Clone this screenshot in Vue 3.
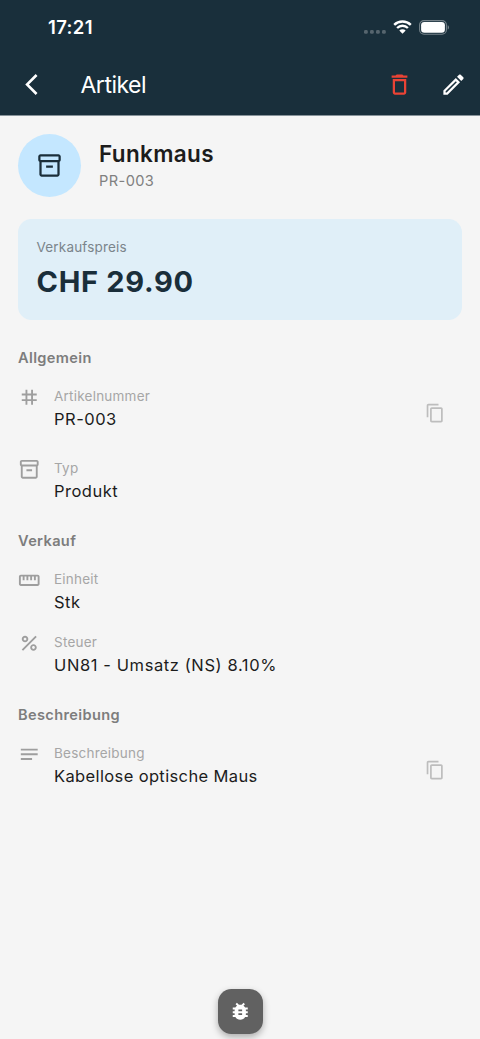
<script setup>
const icons = {
  archive: 'M20 2H4c-1 0-2 .9-2 2v3.01c0 .72.43 1.34 1 1.69V20c0 1.1 1.1 2 2 2h14c.9 0 2-.9 2-2V8.7c.57-.35 1-.97 1-1.69V4c0-1.1-1-2-2-2zm-1 18H5V9h14v11zm1-13H4V4h16v3zM9 12h6v2H9z',
  tag: 'M20 10V8h-4V4h-2v4h-4V4H8v4H4v2h4v4H4v2h4v4h2v-4h4v4h2v-4h4v-2h-4v-4h4zm-6 4h-4v-4h4v4z',
  ruler: 'M21 6H3c-1.1 0-2 .9-2 2v8c0 1.1.9 2 2 2h18c1.1 0 2-.9 2-2V8c0-1.1-.9-2-2-2zm0 10H3V8h2v4h2V8h2v4h2V8h2v4h2V8h2v4h2V8h2v8z',
  percent: 'M7.5 11C9.43 11 11 9.43 11 7.5S9.43 4 7.5 4 4 5.57 4 7.5 5.57 11 7.5 11zm0-5C8.33 6 9 6.67 9 7.5S8.33 9 7.5 9 6 8.33 6 7.5 6.67 6 7.5 6zM4 18.58L18.59 4l1.41 1.41L5.42 20zM16.5 13c-1.93 0-3.5 1.57-3.5 3.5s1.57 3.5 3.5 3.5 3.5-1.57 3.5-3.5-1.57-3.5-3.5-3.5zm0 5c-.83 0-1.5-.67-1.5-1.5s.67-1.5 1.5-1.5 1.5.67 1.5 1.5-.67 1.5-1.5 1.5z',
  notes: 'M21 11.01L3 11v2h18zM3 16h12v2H3zM21 6H3v2.01L21 8z',
  copy: 'M16 1H4c-1.1 0-2 .9-2 2v14h2V3h12V1zm3 4H8c-1.1 0-2 .9-2 2v14c0 1.1.9 2 2 2h11c1.1 0 2-.9 2-2V7c0-1.1-.9-2-2-2zm0 16H8V7h11v14z',
  trash: 'M6 19c0 1.1.9 2 2 2h8c1.1 0 2-.9 2-2V7H6v12zM8 9h8v10H8V9zm7.5-5l-1-1h-5l-1 1H5v2h14V4z',
  edit: 'M14.06 9.02l.92.92L5.92 19H5v-.92l9.06-9.06M17.66 3c-.25 0-.51.1-.7.29l-1.83 1.83 3.75 3.75 1.83-1.83c.39-.39.39-1.02 0-1.41l-2.34-2.34c-.2-.2-.45-.29-.71-.29zm-3.6 3.19L3 17.25V21h3.75L17.81 9.94l-3.75-3.75z',
  back: 'M17.77 3.77L16 2 6 12l10 10 1.77-1.77L9.54 12z',
  bug: 'M20 8h-2.81c-.45-.78-1.07-1.45-1.82-1.96L17 4.41 15.59 3l-2.17 2.17C12.96 5.06 12.49 5 12 5s-.96.06-1.41.17L8.41 3 7 4.41l1.62 1.63C7.88 6.55 7.26 7.22 6.81 8H4v2h2.09c-.05.33-.09.66-.09 1v1H4v2h2v1c0 .34.04.67.09 1H4v2h2.81c1.04 1.79 2.97 3 5.19 3s4.15-1.21 5.19-3H20v-2h-2.09c.05-.33.09-.66.09-1v-1h2v-2h-2v-1c0-.34-.04-.67-.09-1H20V8zm-6 8h-4v-2h4v2zm0-4h-4v-2h4v2z',
}

const sections = [
  {
    title: 'Allgemein',
    rows: [
      { icon: 'tag', label: 'Artikelnummer', value: 'PR-003', copy: true },
      { icon: 'archive', label: 'Typ', value: 'Produkt' },
    ],
  },
  {
    title: 'Verkauf',
    rows: [
      { icon: 'ruler', label: 'Einheit', value: 'Stk' },
      { icon: 'percent', label: 'Steuer', value: 'UN81 - Umsatz (NS) 8.10%' },
    ],
  },
  {
    title: 'Beschreibung',
    rows: [{ icon: 'notes', label: 'Beschreibung', value: 'Kabellose optische Maus', copy: true }],
  },
]
</script>

<template>
  <div class="screen">
    <header class="top">
      <div class="status">
        <span class="time">17:21</span>
        <div class="indicators">
          <svg class="dots" width="22" height="4" viewBox="0 0 22 4">
            <rect v-for="i in 4" :key="i" :x="(i - 1) * 6" y="0" width="3.8" height="3.8" rx="1.4" />
          </svg>
          <svg class="wifi" width="19" height="14" viewBox="0 0 19 14">
            <path d="M1.2 4.9A11.8 11.8 0 0 1 17.8 4.9" />
            <path d="M4.1 8A7.7 7.7 0 0 1 14.9 8" />
            <path class="solid" d="M9.5 13.7L6.3 10.5a4.6 4.6 0 0 1 6.4 0z" />
          </svg>
          <svg class="battery" width="31" height="15" viewBox="0 0 31 15">
            <rect class="shell" x="0.6" y="0.6" width="26.8" height="13.6" rx="4.4" />
            <rect class="charge" x="2.1" y="2.1" width="23.8" height="10.6" rx="3.2" />
            <path class="cap" d="M28.7 5.2c1.7.6 1.7 3.8 0 4.4z" />
          </svg>
        </div>
      </div>
      <nav class="bar">
        <svg class="back" viewBox="0 0 24 24"><path :d="icons.back" /></svg>
        <h1>Artikel</h1>
        <svg class="action trash" viewBox="0 0 24 24"><path :d="icons.trash" /></svg>
        <svg class="action" viewBox="0 0 24 24"><path :d="icons.edit" /></svg>
      </nav>
    </header>

    <main class="content">
      <div class="product">
        <div class="avatar">
          <svg viewBox="0 0 24 24"><path :d="icons.archive" /></svg>
        </div>
        <div>
          <h2>Funkmaus</h2>
          <p class="number">PR-003</p>
        </div>
      </div>

      <div class="price">
        <div class="price-label">Verkaufspreis</div>
        <div class="amount">CHF 29.90</div>
      </div>

      <section v-for="section in sections" :key="section.title">
        <h3>{{ section.title }}</h3>
        <div v-for="row in section.rows" :key="row.label" class="row" :class="{ tall: row.copy }">
          <svg class="row-icon" viewBox="0 0 24 24"><path :d="icons[row.icon]" /></svg>
          <div class="text">
            <div class="label">{{ row.label }}</div>
            <div class="value" :class="row.icon">{{ row.value }}</div>
          </div>
          <svg v-if="row.copy" class="copy" viewBox="0 0 24 24"><path :d="icons.copy" /></svg>
        </div>
      </section>
    </main>

    <button class="debug" aria-label="Debug">
      <svg viewBox="0 0 24 24"><path :d="icons.bug" /></svg>
    </button>
  </div>
</template>

<style>
body {
  margin: 0;
  background: #f5f5f5;
}
</style>

<style scoped>
.screen {
  position: relative;
  width: 480px;
  height: 1039px;
  overflow: hidden;
  background: #f5f5f5;
  color: #1c1c1c;
  font-family: Inter, "Liberation Sans", sans-serif;
}
svg {
  display: block;
  flex: none;
  fill: currentColor;
}
h1, h2, h3, p {
  margin: 0;
}
.top {
  box-sizing: border-box;
  height: 116px;
  border-bottom: 1px solid #87939a;
  background: #192f3b;
  color: #fff;
}
.status {
  display: flex;
  align-items: center;
  justify-content: space-between;
  height: 54px;
  padding: 0 30.5px 0 48px;
}
.time {
  font-size: 18.5px;
  font-weight: 600;
  letter-spacing: 0.35px;
}
.indicators {
  display: flex;
  align-items: center;
}
.dots {
  margin: 10px 7px 0 0;
  fill: #56656e;
}
.wifi {
  margin-right: 7px;
  fill: none;
  stroke: #fff;
  stroke-width: 2.4;
}
.wifi .solid {
  fill: #fff;
  stroke: none;
}
.shell {
  fill: none;
  stroke: #76838a;
  stroke-width: 1.1;
}
.charge {
  fill: #fff;
}
.cap {
  fill: #76838a;
}
.bar {
  display: flex;
  align-items: center;
  height: 61px;
  padding: 0 13.5px 0 18.5px;
}
.back {
  width: 25px;
  height: 25px;
}
h1 {
  flex: 1;
  margin-left: 37px;
  font-size: 23px;
  line-height: 28px;
  font-weight: 400;
  letter-spacing: -0.5px;
}
.action {
  width: 27px;
  height: 27px;
}
.trash {
  margin-right: 27px;
  color: #ea4335;
}
.content {
  padding: 17.5px 18px 0;
}
.product {
  display: flex;
  align-items: center;
  gap: 18px;
  height: 63px;
}
.avatar {
  display: flex;
  align-items: center;
  justify-content: center;
  width: 63px;
  height: 63px;
  border-radius: 50%;
  background: #c4e7ff;
  color: #1a2e3a;
}
.avatar svg {
  width: 27px;
  height: 27px;
}
h2 {
  margin-top: 1px;
  font-size: 22.5px;
  line-height: 30px;
  font-weight: 600;
  letter-spacing: 0.35px;
}
.number {
  margin-top: 1px;
  font-size: 14.6px;
  line-height: 22px;
  letter-spacing: 0.4px;
  color: #808080;
}
.price {
  box-sizing: border-box;
  height: 101.5px;
  margin: 22px 0 28px;
  padding: 19.5px 18.5px;
  border-radius: 13.5px;
  background: #e0eff8;
}
.price-label {
  font-size: 13.5px;
  line-height: 18px;
  letter-spacing: 0.17px;
  color: #7b858b;
}
.amount {
  margin-top: 8px;
  font-size: 29px;
  line-height: 36px;
  font-weight: 700;
  letter-spacing: 0.7px;
  color: #1a2e3a;
}
section {
  margin-bottom: 19px;
}
h3 {
  padding-top: 1px;
  margin-bottom: 10px;
  font-size: 14.6px;
  line-height: 18px;
  font-weight: 600;
  letter-spacing: 0.35px;
  color: #7d7d7d;
}
.row {
  box-sizing: border-box;
  display: flex;
  align-items: flex-start;
  height: 63px;
  padding-top: 10px;
}
.row.tall {
  height: 72px;
}
.row-icon {
  width: 22.5px;
  height: 22.5px;
  margin-right: 13.5px;
  margin-top: -1px;
  color: #9e9e9e;
}
.text {
  flex: 1;
}
.label {
  font-size: 13.5px;
  line-height: 18px;
  letter-spacing: 0.23px;
  color: #a6a6a6;
}
.value {
  margin-top: 2px;
  font-size: 16.5px;
  line-height: 24px;
  letter-spacing: 0.5px;
}
.value.percent {
  letter-spacing: 0.6px;
}
.value.notes {
  letter-spacing: 0.37px;
}
.copy {
  width: 20.25px;
  height: 20.25px;
  margin: 16px 17px 0 0;
  color: #bdbdbd;
}
.debug {
  position: absolute;
  left: 217.5px;
  top: 988.5px;
  display: flex;
  align-items: center;
  justify-content: center;
  width: 45px;
  height: 45px;
  padding: 0;
  border: 0;
  border-radius: 13.5px;
  background: #616161;
  color: #fff;
  box-shadow: 0 3px 7px rgba(0, 0, 0, 0.3);
}
.debug svg {
  width: 22.5px;
  height: 22.5px;
}
</style>
